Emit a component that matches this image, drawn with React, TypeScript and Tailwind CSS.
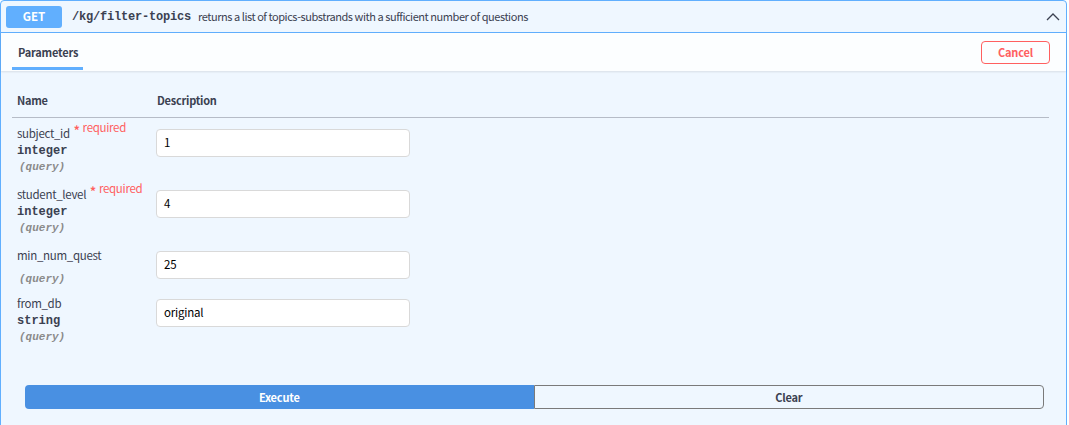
import React from "react";

const sans = { fontFamily: '"Noto Sans CJK JP", "Noto Sans", sans-serif' };
const mono = { fontFamily: '"Liberation Mono", "DejaVu Sans Mono", monospace' };

type Param = { name: string; type?: string; required?: boolean; value: string };

const params: Param[] = [
  { name: "subject_id", type: "integer", required: true, value: "1" },
  { name: "student_level", type: "integer", required: true, value: "4" },
  { name: "min_num_quest", value: "25" },
  { name: "from_db", type: "string", value: "original" },
];

function Row({ p }: { p: Param }) {
  return (
    <div className={p.type ? "flex pt-[7px] pb-[4px]" : "flex pt-[7px] pb-[1px]"}>
      <div className="w-[144px] pl-[5px]">
        <div className="flex items-start h-[16px] leading-[16px] text-[11.5px] tracking-[-0.3px] text-[#3b4151]" style={sans}>
          <span>{p.name}</span>
          {p.required && (
            <span className="ml-[4px] text-[#ff6060] leading-[12px] relative top-[-4px] flex items-start">
              <span className="font-bold text-[12px] relative top-[3px]">*</span>
              <span className="ml-[3px] text-[11.5px]">required</span>
            </span>
          )}
        </div>
        {p.type ? (
          <div className="h-[19px] pt-[2px] leading-[17px] text-[12px] font-bold text-[#3b4151]" style={mono}>
            {p.type}
          </div>
        ) : (
          <div className="h-[9px]" />
        )}
        <div className="h-[15px] leading-[15px] text-[11px] italic font-bold text-[#8a8a8a] pl-[2px]" style={mono}>
          (query)
        </div>
      </div>
      <div className="pt-[4px]">
        <div
          className="w-[254px] h-[28px] bg-white border border-[#d9d9d9] rounded-[4px] flex items-center pl-[7px] text-[11.5px] tracking-[-0.2px] text-[#000]"
          style={sans}
        >
          {p.value}
        </div>
      </div>
    </div>
  );
}

export default function App() {
  return (
    <div className="w-[1067px] bg-white">
      <div className="border border-[#61affe] rounded-[4px] bg-[#eff7ff] pb-[24px]">
        {/* summary */}
        <div className="flex items-center h-[32px] px-[5px] border-b border-[#61affe]">
          <div
            className="w-[56px] h-[22px] rounded-[3px] bg-[#61affe] text-white text-[11.5px] font-bold flex items-center justify-center"
            style={sans}
          >
            GET
          </div>
          <div className="ml-[10px] text-[12px] tracking-[-0.2px] font-bold text-[#3b4151]" style={mono}>
            /kg/filter-topics
          </div>
          <div className="ml-[7px] text-[11px] tracking-[-0.45px] text-[#3b4151]" style={sans}>
            returns a list of topics-substrands with a sufficient number of questions
          </div>
          <div className="ml-auto mr-[1px]">
            <svg width="14" height="10" viewBox="0 0 14 10">
              <polyline points="1,8 7,2 13,8" fill="none" stroke="#3b4151" strokeWidth="1.3" />
            </svg>
          </div>
        </div>
        {/* tab header */}
        <div className="flex items-center h-[38px] bg-[#fcfeff] shadow-[0_1px_2px_rgba(0,0,0,0.1)] pr-[16px]">
          <div className="ml-[11px] w-[71px] h-[38px] relative flex items-center">
            <span className="ml-[6px] text-[11px] tracking-[-0.2px] font-bold text-[#3b4151]" style={sans}>
              Parameters
            </span>
            <div className="absolute left-0 right-0 bottom-[1px] h-[3px] bg-[#61affe]" />
          </div>
          <div
            className="ml-auto w-[69px] h-[23px] border border-[#ff6060] rounded-[4px] text-[#ff6060] text-[11px] tracking-[-0.2px] font-bold flex items-center justify-center"
            style={sans}
          >
            Cancel
          </div>
        </div>
        {/* table */}
        <div className="ml-[11px] w-[1037px] mt-[20px]">
          <div
            className="flex h-[27px] border-b border-[#b6bcc7] text-[11px] tracking-[-0.25px] font-bold text-[#3b4151]"
            style={sans}
          >
            <div className="w-[144px] pl-[5px] pt-[1px]">Name</div>
            <div className="pt-[1px] pl-[1px]">Description</div>
          </div>
          {params.map((p) => (
            <Row key={p.name} p={p} />
          ))}
        </div>
        {/* execute */}
        <div className="flex ml-[24px] mt-[36px] mr-[22px]">
          <div
            className="flex-1 h-[24px] bg-[#4990e2] rounded-l-[4px] text-white text-[11px] tracking-[-0.2px] font-bold flex items-center justify-center"
            style={sans}
          >
            Execute
          </div>
          <div
            className="flex-1 h-[24px] border border-[#7a7a7a] rounded-r-[4px] text-[#3b4151] text-[11px] tracking-[-0.2px] font-bold flex items-center justify-center"
            style={sans}
          >
            Clear
          </div>
        </div>
      </div>
    </div>
  );
}
